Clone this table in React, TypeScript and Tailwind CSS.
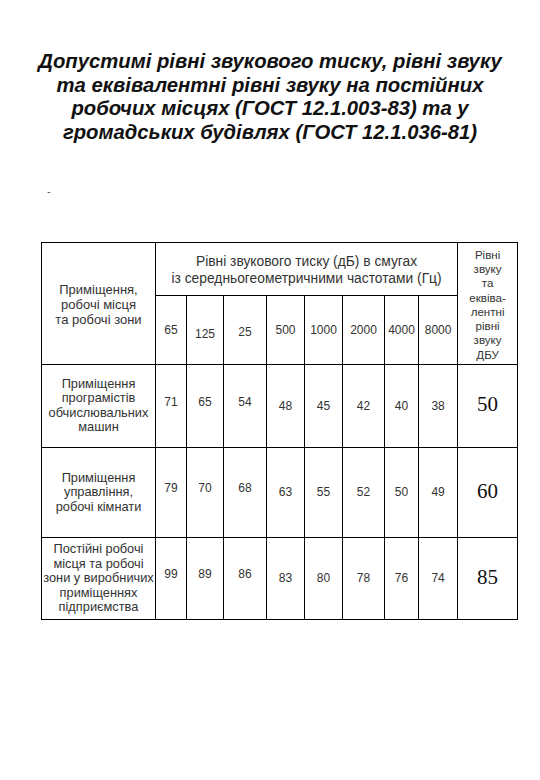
import React from 'react';

const freqs = ['65', '125', '25', '500', '1000', '2000', '4000', '8000'];

const rows = [
  {
    label: ['Приміщення', 'програмістів', 'обчислювальних', 'машин'],
    values: ['71', '65', '54', '48', '45', '42', '40', '38'],
    dbu: '50',
    h: 'h-[83px]',
  },
  {
    label: ['Приміщення', 'управління,', 'робочі кімнати'],
    values: ['79', '70', '68', '63', '55', '52', '50', '49'],
    dbu: '60',
    h: 'h-[90px]',
  },
  {
    label: ['Постійні робочі', 'місця та робочі', 'зони у виробничих', 'приміщеннях', 'підприємства'],
    values: ['99', '89', '86', '83', '80', '78', '76', '74'],
    dbu: '85',
    h: 'h-[82px]',
  },
];

const colWidths = ['w-[114px]', 'w-[31px]', 'w-[37px]', 'w-[43px]', 'w-[38px]', 'w-[38px]', 'w-[42px]', 'w-[34px]', 'w-[39px]', 'w-[60px]'];

export default function App() {
  return (
    <div className="w-[540px] h-[780px] bg-white relative font-['Liberation_Sans',Arial,sans-serif]">
      {/* Title */}
      <h1 className="pt-[50px] text-center text-[20.3px] leading-[23.7px] font-bold italic text-[#111]">
        Допустимі рівні звукового тиску, рівні звуку
        <br />
        та еквівалентні рівні звуку на постійних
        <br />
        робочих місцях (ГОСТ 12.1.003-83) та у
        <br />
        громадських будівлях (ГОСТ 12.1.036-81)
      </h1>

      <div className="pl-[47px] pt-[39px] text-[11px] leading-[14px] text-[#555]">-</div>

      {/* Table */}
      <div className="pl-[41px] pt-[44px]">
        <table className="border-collapse border border-black table-fixed w-[476px] text-[#333]">
          <colgroup>
            {colWidths.map((w, i) => (
              <col key={i} className={w} />
            ))}
          </colgroup>
          <thead>
            <tr className="h-[53px]">
              <td rowSpan={2} className="border border-black text-center align-middle text-[13px] leading-[15px] pt-[2px]">
                Приміщення,
                <br />
                робочі місця
                <br />
                та робочі зони
              </td>
              <td colSpan={8} className="border border-black text-center align-middle text-[13.8px] leading-[17px] pt-[2px]">
                Рівні звукового тиску (дБ) в смугах
                <br />
                із середньогеометричними частотами (Гц)
              </td>
              <td rowSpan={2} className="border border-black text-center align-middle text-[11.6px] leading-[14.3px] pt-[3px]">
                Рівні
                <br />
                звуку
                <br />
                та
                <br />
                еквіва-
                <br />
                лентні
                <br />
                рівні
                <br />
                звуку
                <br />
                ДБУ
              </td>
            </tr>
            <tr className="h-[69px]">
              {freqs.map((f, i) => (
                <td key={f} className={`border border-black text-center align-middle text-[12px] ${i === 1 ? 'pt-[8px]' : i === 2 ? 'pt-[4px]' : ''}`}>
                  {f}
                </td>
              ))}
            </tr>
          </thead>
          <tbody>
            {rows.map((r) => (
              <tr key={r.dbu} className={r.h}>
                <td className="border border-black text-center align-middle text-[12.8px] leading-[14.5px]">
                  {r.label.map((l, i) => (
                    <div key={i}>{l}</div>
                  ))}
                </td>
                {r.values.map((v, i) => (
                  <td key={i} className={`border border-black text-center align-middle text-[12px] ${i < 3 ? 'pb-[8px]' : ''}`}>
                    {v}
                  </td>
                ))}
                <td className="border border-black text-center align-middle text-[21px] font-['Liberation_Serif',serif] text-[#111] pb-[2px]">
                  {r.dbu}
                </td>
              </tr>
            ))}
          </tbody>
        </table>
      </div>
    </div>
  );
}
